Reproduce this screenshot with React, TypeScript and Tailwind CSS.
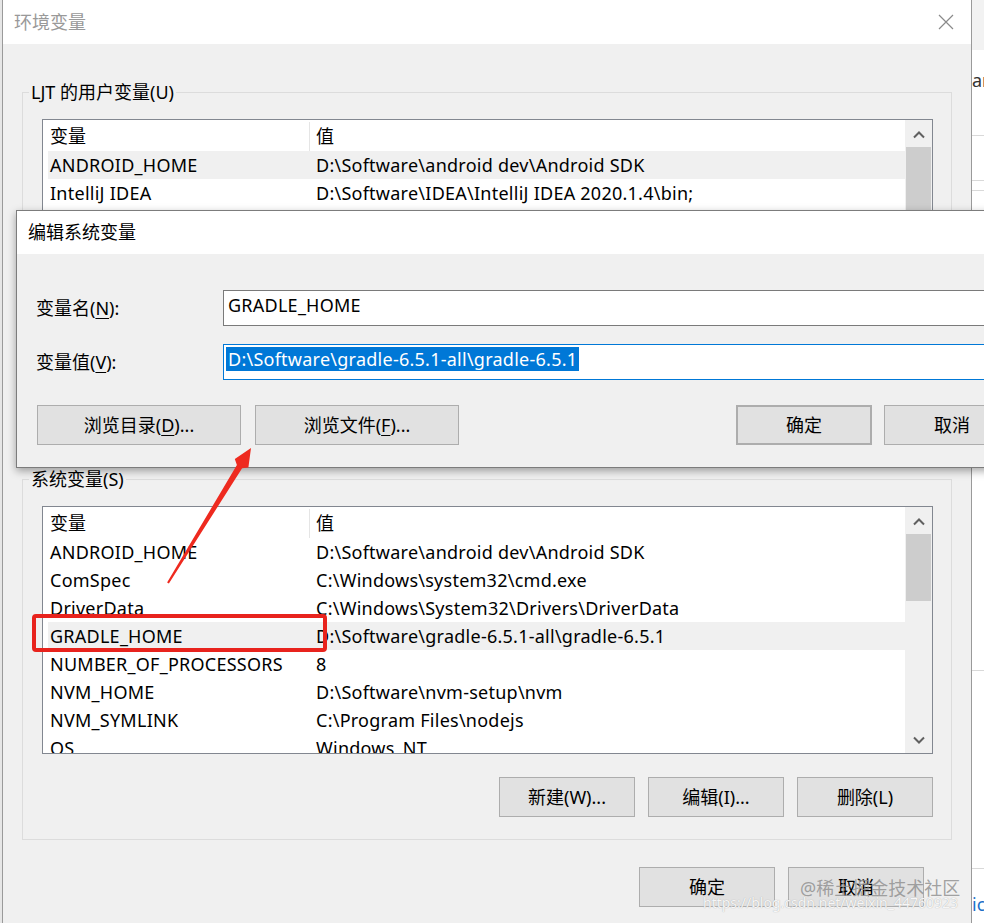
import React from "react";

const font = "font-['Noto_Sans','Noto_Sans_CJK_SC',sans-serif]";

type Row = [string, string];

const userRows: Row[] = [
  ["ANDROID_HOME", "D:\\Software\\android dev\\Android SDK"],
  ["IntelliJ IDEA", "D:\\Software\\IDEA\\IntelliJ IDEA 2020.1.4\\bin;"],
  ["OneDrive", "C:\\Users\\LJT\\OneDrive"],
  ["Path", "C:\\Users\\LJT\\AppData\\Local\\Microsoft\\WindowsApps;"],
  ["TEMP", "C:\\Users\\LJT\\AppData\\Local\\Temp"],
  ["TMP", "C:\\Users\\LJT\\AppData\\Local\\Temp"],
];

const sysRows: Row[] = [
  ["ANDROID_HOME", "D:\\Software\\android dev\\Android SDK"],
  ["ComSpec", "C:\\Windows\\system32\\cmd.exe"],
  ["DriverData", "C:\\Windows\\System32\\Drivers\\DriverData"],
  ["GRADLE_HOME", "D:\\Software\\gradle-6.5.1-all\\gradle-6.5.1"],
  ["NUMBER_OF_PROCESSORS", "8"],
  ["NVM_HOME", "D:\\Software\\nvm-setup\\nvm"],
  ["NVM_SYMLINK", "C:\\Program Files\\nodejs"],
  ["OS", "Windows_NT"],
];

const Chevron = ({ down = false }: { down?: boolean }) => (
  <svg width="12" height="8" viewBox="0 0 12 8">
    <path
      d={down ? "M1 1.5 L6 6.5 L11 1.5" : "M1 6.5 L6 1.5 L11 6.5"}
      stroke="#606060"
      strokeWidth={2}
      fill="none"
    />
  </svg>
);

const Btn = ({
  children,
  className = "",
}: {
  children: React.ReactNode;
  className?: string;
}) => (
  <div
    className={
      "h-[40px] shrink-0 border border-[#adadad] bg-[#e1e1e1] flex items-center justify-center " +
      className
    }
  >
    {children}
  </div>
);

const ListBox = ({
  rows,
  highlight,
  thumbH,
}: {
  rows: Row[];
  highlight: number;
  thumbH: number;
}) => (
  <div className="w-[891px] h-[248px] border border-[#828790] bg-white flex overflow-hidden">
    <div className="flex-1 flex flex-col">
      <div className="h-[31px] shrink-0 flex items-center pt-[2px]">
        <div className="w-[267px] h-full border-r border-[#e5e5e5] pl-[7px] flex items-center">
          变量
        </div>
        <div className="pl-[6px]">值</div>
      </div>
      {rows.map(([name, value], i) => (
        <div
          key={name}
          className={
            "h-[28px] shrink-0 ml-[5px] flex items-center whitespace-nowrap tracking-[0.25px] " +
            (i === highlight ? "bg-[#f0f0f0]" : "")
          }
        >
          <div className="w-[261px] pl-[2px]">{name}</div>
          <div className="pl-[7px]">{value}</div>
        </div>
      ))}
    </div>
    <div className="w-[27px] shrink-0 bg-[#f0f0f0] flex flex-col">
      <div className="h-[27px] shrink-0 flex items-center justify-center pt-[3px]">
        <Chevron />
      </div>
      <div
        className="mx-[1px] bg-[#cdcdcd] shrink-0"
        style={{ height: thumbH }}
      />
      <div className="flex-1" />
      <div className="h-[26px] shrink-0 flex items-center justify-center">
        <Chevron down />
      </div>
    </div>
  </div>
);

const Group = ({
  label,
  rows,
  highlight,
  thumbH,
  className = "",
}: {
  label: string;
  rows: Row[];
  highlight: number;
  thumbH: number;
  className?: string;
}) => (
  <div
    className={
      "ml-[19px] w-[930px] border border-[#dcdcdc] pl-[19px] pb-[22px] " +
      className
    }
  >
    <div className="-mt-[12px] -ml-[13px] w-fit bg-[#f0f0f0] px-[2px] leading-[22px]">
      {label}
    </div>
    <div className="mt-[16px]">
      <ListBox rows={rows} highlight={highlight} thumbH={thumbH} />
    </div>
    <div className="mt-[23px] w-[891px] flex justify-end gap-[13px]">
      <Btn className="w-[136px]">新建(W)...</Btn>
      <Btn className="w-[136px]">编辑(I)...</Btn>
      <Btn className="w-[136px]">删除(L)</Btn>
    </div>
  </div>
);

export default function App() {
  return (
    <div
      className={
        "relative w-[984px] h-[923px] overflow-hidden flex bg-white text-[18px] text-black " +
        font
      }
    >
      {/* desktop strip at left */}
      <div className="w-[2px] shrink-0 bg-[#e6e6e6]" />

      {/* 环境变量 */}
      <div className="w-[970px] shrink-0 border-x border-[#9a9a9a] flex flex-col bg-[#f0f0f0]">
        <div className="h-[44px] shrink-0 bg-white flex items-center justify-between pl-[11px] pr-[17px]">
          <span className="text-[#999999]">环境变量</span>
          <svg width="16" height="16" viewBox="0 0 16 16">
            <path d="M1 1 L15 15 M15 1 L1 15" stroke="#8a8a8a" strokeWidth={1.2} />
          </svg>
        </div>
        <div className="pt-[48px] flex flex-col">
          <Group
            label="LJT 的用户变量(U)"
            rows={userRows}
            highlight={0}
            thumbH={120}
          />
          <Group
            label="系统变量(S)"
            rows={sysRows}
            highlight={3}
            thumbH={67}
            className="mt-[26px]"
          />
          <div className="mt-[27px] pr-[47px] flex justify-end gap-[13px]">
            <Btn className="w-[136px]">确定</Btn>
            <Btn className="w-[136px]">取消</Btn>
          </div>
        </div>
      </div>

      {/* window behind, at right */}
      <div className="flex-1 flex flex-col bg-white overflow-hidden whitespace-nowrap">
        <div className="h-[50px] shrink-0 bg-[#f2f2f2]" />
        <div className="mt-[19px] leading-[22px] text-[#333333]">ar</div>
        <div className="mt-[44px] border-b border-[#d9d9d9]" />
        <div className="mt-[44px] border-b border-[#d9d9d9]" />
        <div className="mt-[9px] border-b border-[#d9d9d9]" />
        <div className="mt-[479px] border-b border-[#d9d9d9]" />
        <div className="mt-[197px] border-b border-[#d9d9d9]" />
        <div className="mt-[24px] text-[#1a6fc9] leading-[22px]">ic</div>
      </div>

      {/* 编辑系统变量 */}
      <div className="absolute left-[16px] top-[210px] w-[1000px] h-[258px] border border-[#7c7c7c] bg-[#f0f0f0] shadow-[0_3px_8px_rgba(0,0,0,0.35)] flex flex-col">
        <div className="h-[43px] shrink-0 bg-white flex items-center pl-[11px]">
          编辑系统变量
        </div>
        <div className="pt-[36px] pl-[19px] flex flex-col">
          <div className="flex items-center">
            <div className="w-[187px]">
              变量名(<u className="underline-offset-[3px]">N</u>):
            </div>
            <div className="w-[780px] h-[36px] border border-[#7a7a7a] bg-white pl-[4px] pt-[2px] leading-[24px] whitespace-nowrap tracking-[0.25px]">
              GRADLE_HOME
            </div>
          </div>
          <div className="mt-[18px] flex items-center">
            <div className="w-[187px]">
              变量值(<u className="underline-offset-[3px]">V</u>):
            </div>
            <div className="w-[780px] h-[36px] border border-[#0078d7] bg-white pl-[2px] pt-[2px] leading-[24px] whitespace-nowrap tracking-[0.25px]">
              <span className="inline-block bg-[#0078d7] text-white px-[2px]">
                D:\Software\gradle-6.5.1-all\gradle-6.5.1
              </span>
            </div>
          </div>
          <div className="mt-[25px] flex">
            <Btn className="w-[204px] ml-[1px]">
              浏览目录(<u className="underline-offset-[3px]">D</u>)...
            </Btn>
            <Btn className="w-[204px] ml-[14px]">
              浏览文件(<u className="underline-offset-[3px]">F</u>)...
            </Btn>
            <Btn className="w-[136px] ml-[277px] border-2 border-[#0078d7]">
              确定
            </Btn>
            <Btn className="w-[136px] ml-[12px]">取消</Btn>
          </div>
        </div>
      </div>

      {/* annotations */}
      <div className="absolute left-[32px] top-[614px] w-[295px] h-[38px] border-[4px] border-[#e8231d] rounded-[4px]" />
      <svg
        className="absolute left-0 top-0 pointer-events-none"
        width="984"
        height="923"
        viewBox="0 0 984 923"
      >
        <polygon
          points="251,448 248.4,467.5 242.1,468.3 168.9,583.5 167.1,582.5 236.9,465.1 234.8,459.1"
          fill="#ee2a1f"
        />
      </svg>

      {/* watermark */}
      <div className="absolute left-[800px] top-[875px] text-[18px] leading-[26px] text-[#8c8c8c]/80">
        @稀土掘金技术社区
      </div>
      <div className="absolute left-[703px] top-[893px] text-[14px] leading-[20px] text-white/90 [text-shadow:0_0_1px_#9a9a9a]">
        https://blog.csdn.net/weixin_44760923
      </div>
    </div>
  );
}
